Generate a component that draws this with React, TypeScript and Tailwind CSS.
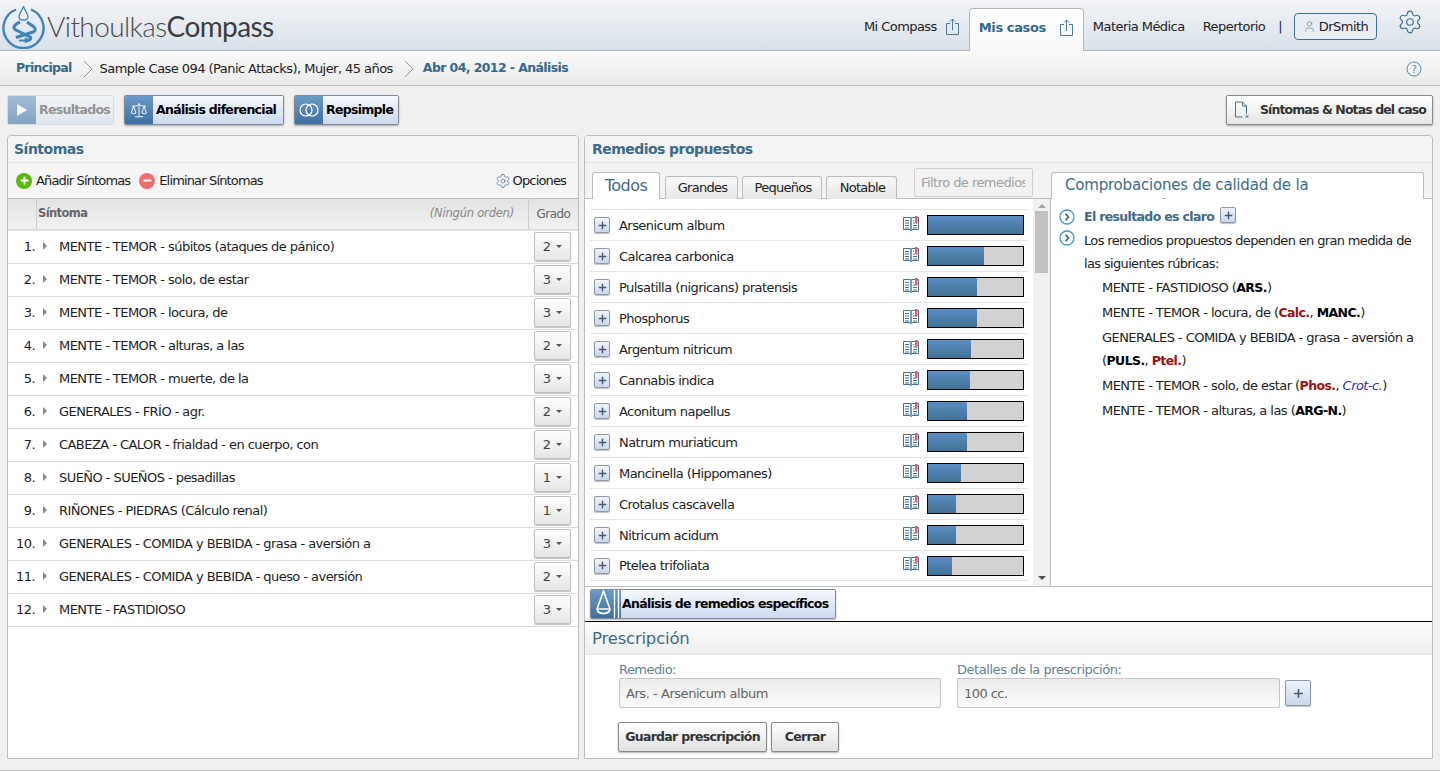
import React from "react";
import { Settings, User, Plus, Minus, Scale } from "lucide-react";

const font = "font-['DejaVu_Sans',sans-serif]";
const bold = "font-bold text-[12.5px] tracking-[-0.7px]";

const Upload = () => (
  <svg width="13" height="17" viewBox="0 0 13 17" fill="none" stroke="#4a7a9c" strokeWidth="1" className="shrink-0">
    <path d="M4 5.500H.5v11h12v-11H9" />
    <path d="M6.500 12V1M4 3.500 6.500 1 9 3.500" />
  </svg>
);

const Book = () => (
  <svg width="16" height="16" viewBox="0 0 16 16" fill="none" className="shrink-0 -mt-[3px]">
    <path d="M.5 1.500h15v12H.5z" stroke="#48708f" fill="#fff" />
    <path d="M8 1v14" stroke="#6d9cbe" strokeWidth="2" />
    <path d="M2 4.500h4M2 7h4M2 9.500h4M2 12h4M10 7h2M10 9.500h4M10 12h4M10 4.500h1" stroke="#48708f" />
    <path d="M12 0h2.500v7L13.200 8 12 7z" fill="#ef5a62" />
  </svg>
);

const Chevron = () => (
  <svg width="16" height="16" viewBox="0 0 16 16" fill="none" className="shrink-0">
    <circle cx="8" cy="8" r="7" stroke="#3f97d6" strokeWidth="1.3" fill="#fff" />
    <path d="m6.500 4.800 3 3.200-3 3.200" stroke="#2f5f86" strokeWidth="1.6" />
  </svg>
);

const PlusBtn = ({ big }: { big?: boolean }) => (
  <span
    className={`flex items-center justify-center shrink-0 rounded-[2px] border border-[#8e99a8] bg-gradient-to-b from-[#f1f4fa] to-[#c9d6ec] shadow-[0_1px_1px_rgba(0,0,0,0.25)] ${
      big ? "w-[26px] h-[26px]" : "w-4 h-4"
    }`}
  >
    <Plus size={big ? 13 : 11} strokeWidth={3} color="#475a70" />
  </span>
);

const Logo = () => (
  <svg width="44" height="46" viewBox="0 0 44 46" fill="none" stroke="#3d85b9" className="shrink-0">
    <path d="M15 6.500A20 20 0 1 0 30 6.500" strokeWidth="2.400" />
    <path d="M22.500 3c-.5 4-4.500 7-4.500 11 0 4 9 4 9 0 0-4-4-7-4.500-11z" strokeWidth="1.300" />
    <path d="M19 19C14 21 11.500 24 14 26.500L29 34c2 1.500 0 3.500-4 3.500" strokeWidth="3" />
    <path d="M26 19l7 5c2 2 1.500 4-1 5L15 34.500" strokeWidth="3" />
    <path d="M18 37.500h7" strokeWidth="2" />
    <path d="m24 34.500 5 3-5 2.500z" fill="#3d85b9" strokeWidth="0.5" />
  </svg>
);

const ActionBtn = ({ icon, label, muted, w }: { icon: React.ReactNode; label: string; muted?: boolean; w: string }) => (
  <button
    className={`flex items-stretch h-[30px] ${w} rounded-[2px] border shadow-[0_1px_2px_rgba(0,0,0,0.3)] overflow-hidden ${
      muted ? "border-[#cfcfcf] opacity-60 shadow-none" : "border-[#7f8b99]"
    }`}
  >
    <span className="w-[28px] shrink-0 flex items-center justify-center bg-gradient-to-b from-[#6b9cc8] to-[#3f6f9f]">{icon}</span>
    <span
      className={`flex-1 flex items-center pl-[3px] pt-[1px] whitespace-nowrap bg-gradient-to-b ${bold} ${
        muted ? "from-[#f4f6fa] to-[#d6e0ee] text-[#555]" : "from-[#f7f9fd] to-[#cbd9f0] text-black"
      }`}
    >
      {label}
    </span>
  </button>
);

const symptoms: [string, number][] = [
  ["MENTE - TEMOR - súbitos (ataques de pánico)", 2],
  ["MENTE - TEMOR - solo, de estar", 3],
  ["MENTE - TEMOR - locura, de", 3],
  ["MENTE - TEMOR - alturas, a las", 2],
  ["MENTE - TEMOR - muerte, de la", 3],
  ["GENERALES - FRÍO - agr.", 2],
  ["CABEZA - CALOR - frialdad - en cuerpo, con", 2],
  ["SUEÑO - SUEÑOS - pesadillas", 1],
  ["RIÑONES - PIEDRAS (Cálculo renal)", 1],
  ["GENERALES - COMIDA y BEBIDA - grasa - aversión a", 3],
  ["GENERALES - COMIDA y BEBIDA - queso - aversión", 2],
  ["MENTE - FASTIDIOSO", 3],
];

const remedies: [string, number][] = [
  ["Arsenicum album", 100],
  ["Calcarea carbonica", 59],
  ["Pulsatilla (nigricans) pratensis", 52],
  ["Phosphorus", 52],
  ["Argentum nitricum", 45],
  ["Cannabis indica", 44],
  ["Aconitum napellus", 41],
  ["Natrum muriaticum", 41],
  ["Mancinella (Hippomanes)", 35],
  ["Crotalus cascavella", 29],
  ["Nitricum acidum", 29],
  ["Ptelea trifoliata", 25],
];

const Tab = ({ label, w }: { label: string; w: string }) => (
  <span className={`h-[23px] ${w} flex items-center justify-center pl-[2px] border border-b-0 border-[#bdbdbd] rounded-t-[3px] bg-gradient-to-b from-[#f8f8f8] to-[#e6e6e6] text-[13px] tracking-[-0.75px] text-[#222]`}>
    {label}
  </span>
);

const Rubric = ({ children }: { children: React.ReactNode }) => (
  <div className="pl-[43px] mb-[2px] leading-[23px] text-[13px] text-[#222] tracking-[-0.55px]">{children}</div>
);

const RB = ({ children, red }: { children: React.ReactNode; red?: boolean }) => (
  <b className={`text-[12.5px] tracking-[-0.6px] ${red ? "text-[#a01010]" : "text-black"}`}>{children}</b>
);

const Arrow = ({ cls }: { cls: string }) => (
  <svg width="10" height="18" viewBox="0 0 10 18" fill="none" stroke="#999" className={cls}>
    <path d="m1 1 8 8-8 8" />
  </svg>
);

export default function App() {
  return (
    <div className={`${font} w-[1440px] h-[771px] overflow-hidden flex flex-col bg-[#f0f0f0] text-[13px] tracking-[-0.55px]`}>
      <header className="h-[51px] shrink-0 flex justify-between border-b border-[#b5b5b5] bg-gradient-to-b from-[#f3f4f6] to-[#d9e1ea]">
        <div className="flex items-center pl-[1px] pt-[1px]">
          <Logo />
          <span className="ml-[2px] text-[28px] tracking-[-0.6px] text-[#4b4b4b] font-['Lato',sans-serif] font-light">
            Vithoulkas<span className="font-normal text-[#3d3d3d]">Compass</span>
          </span>
        </div>
        <nav className="flex items-end text-[#222]">
          <div className="flex items-center gap-[9px] h-[47px] pr-[10px]">
            <span>Mi Compass</span>
            <Upload />
          </div>
          <div className="flex items-center justify-between h-[43px] w-[115px] pl-[9px] pr-[10px] pb-[5px] -mb-px border border-b-0 border-[#b5b5b5] rounded-t-[4px] bg-gradient-to-b from-white to-[#f8f8f8] font-bold tracking-[-0.4px] text-[#356a8c] whitespace-nowrap">
            <span>Mis casos</span>
            <Upload />
          </div>
          <div className="flex items-center h-[47px] pl-[9px]">
            <span>Materia Médica</span>
            <span className="ml-[18px]">Repertorio</span>
            <span className="ml-[13px]">|</span>
            <span className="ml-[12px] w-[83px] h-[27px] flex items-center justify-center gap-[3px] rounded-[4px] border border-[#3f6f94] bg-[#e8edf3]">
              <User size={13} color="#5d8cb0" strokeWidth={1.3} />
              DrSmith
            </span>
          </div>
          <div className="w-[63px] h-full flex justify-center pl-[3px] pt-[9px]">
            <Settings size={26} color="#3f7296" strokeWidth={1.1} />
          </div>
        </nav>
      </header>

      <div className="h-[35px] shrink-0 flex items-center justify-between pl-[16px] pr-[18px] pt-[1px] border-b border-[#bdbdbd] bg-gradient-to-b from-[#fafafa] to-[#eaeaea] text-[#222]">
        <div className="flex items-center">
          <span className={`${bold} text-[#356a8c]`}>Principal</span>
          <Arrow cls="ml-[11px] mr-[7px]" />
          <span>Sample Case 094 (Panic Attacks), Mujer, 45 años</span>
          <Arrow cls="ml-[11px] mr-[9px]" />
          <span className="font-bold text-[12.5px] tracking-[-0.6px] text-[#356a8c]">Abr 04, 2012 - Análisis</span>
        </div>
        <svg width="16" height="16" viewBox="0 0 16 16" fill="none" stroke="#4f86ad">
          <circle cx="8" cy="8" r="7" />
          <text x="8" y="12" textAnchor="middle" fontSize="10" fill="#4f86ad" stroke="none">?</text>
        </svg>
      </div>

      <div className="h-[49px] shrink-0 flex items-center justify-between pl-[7px] pr-[7px] pb-[1px]">
        <div className="flex gap-[10px]">
          <ActionBtn w="w-[107px]" muted label="Resultados" icon={<svg width="12" height="14" viewBox="0 0 12 14"><path d="M1 1l10 6-10 6z" fill="#fff" /></svg>} />
          <ActionBtn w="w-[160px]" label="Análisis diferencial" icon={<Scale size={18} color="#fff" strokeWidth={1.2} />} />
          <ActionBtn
            w="w-[105px]"
            label="Repsimple"
            icon={
              <svg width="20" height="14" viewBox="0 0 20 14" fill="none" stroke="#fff" strokeWidth="1.2">
                <circle cx="7" cy="7" r="6" />
                <circle cx="13" cy="7" r="6" />
              </svg>
            }
          />
        </div>
        <button className="h-[30px] w-[207px] flex items-center gap-[9px] pl-[7px] pt-[1px] rounded-[2px] border border-[#8a8a8a] bg-gradient-to-b from-white to-[#e6e6e6] shadow-[0_1px_2px_rgba(0,0,0,0.3)] text-[#333] whitespace-nowrap font-bold text-[12.5px] tracking-[-0.9px]">
          <svg width="17" height="19" viewBox="0 0 17 19" fill="none" stroke="#4d7390" className="shrink-0">
            <path d="M1.500 1h7l4 4v8M8.500 1v4h4M1.500 1v15h7" />
            <path d="m11.500 14 3 3m0-3-3 3" strokeWidth="1" />
          </svg>
          Síntomas &amp; Notas del caso
        </button>
      </div>

      <main className="h-[624px] shrink-0 flex gap-[5px] pl-[7px] pr-[7px]">
        <section className="w-[572px] shrink-0 flex flex-col border border-[#bdbdbd] rounded-t-[4px] bg-white overflow-hidden">
          <div className="h-[27px] shrink-0 flex items-center pl-[6px] border-b border-[#e2e2e2] bg-[#f4f4f4] text-[14px] font-bold tracking-[-0.5px] text-[#3d6b88]">Síntomas</div>
          <div className="h-[35px] shrink-0 flex items-center justify-between pl-[8px] pr-[12px] bg-[#f5f5f5] text-[#222] tracking-[-0.85px]">
            <div className="flex items-center">
              <span className="w-4 h-4 rounded-full bg-[#5cb80a] flex items-center justify-center"><Plus size={11} strokeWidth={4} color="#fff" /></span>
              <span className="ml-[4px]">Añadir Síntomas</span>
              <span className="ml-[9px] w-4 h-4 rounded-full bg-[#f26d6d] flex items-center justify-center"><Minus size={11} strokeWidth={4} color="#fff" /></span>
              <span className="ml-[4px]">Eliminar Síntomas</span>
            </div>
            <div className="flex items-center gap-[2px]">
              <Settings size={16} color="#4d7390" strokeWidth={1.1} />
              Opciones
            </div>
          </div>
          <div className="h-[33px] shrink-0 flex border-t border-[#bdbdbd] border-b-[2px] border-b-[#e0e0e0] bg-gradient-to-b from-[#e3e3e3] to-[#f1f1f1] text-[12px] text-[#666]">
            <div className="w-[29px] border-r border-[#cfcfcf]" />
            <div className="flex-1 flex items-center justify-between pl-[1px] pr-[14px]">
              <span className="font-bold text-[11.5px] tracking-[-0.6px]">Síntoma</span>
              <span className="italic font-normal text-[11.5px] text-[#888] tracking-[-0.2px]">(Ningún orden)</span>
            </div>
            <div className="w-[50px] border-l border-[#cfcfcf] flex items-center justify-center">Grado</div>
          </div>
          {symptoms.map(([t, g], i) => (
            <div key={i} className="h-[33px] shrink-0 flex items-center border-b border-[#dcdcdc] text-[#1d1d1d]">
              <span className="w-[27px] text-right">{i + 1}.</span>
              <span className="ml-[8px] w-0 h-0 border-y-[4px] border-y-transparent border-l-[4px] border-l-[#888] -mt-[3px]" />
              <span className="ml-[12px] flex-1 whitespace-nowrap">{t}</span>
              <span className="self-start mt-[1px] w-[37px] h-[29px] mr-[7px] flex items-center justify-center gap-[6px] rounded-[2px] border border-[#c0c0c0] bg-gradient-to-b from-white to-[#e5e5e5] shadow-[0_1px_1px_rgba(0,0,0,0.25)] text-[#444]">
                {g}
                <span className="w-0 h-0 border-x-[3px] border-x-transparent border-t-[3px] border-t-[#555]" />
              </span>
            </div>
          ))}
        </section>

        <section className="flex-1 flex flex-col border border-[#bdbdbd] rounded-t-[4px] bg-white overflow-hidden">
          <div className="h-[27px] shrink-0 flex items-center pl-[7px] border-b border-[#e2e2e2] bg-[#f4f4f4] text-[14px] font-bold tracking-[-0.55px] text-[#3d6b88]">Remedios propuestos</div>
          <div className="h-[36px] shrink-0 flex items-end border-b border-[#bdbdbd] bg-[#f3f3f3] pl-[7px] whitespace-nowrap">
            <span className="h-[27px] w-[68px] -mb-px flex items-center justify-center border border-b-0 border-[#bdbdbd] rounded-t-[3px] bg-white text-[16px] text-[#3d6b88]">Todos</span>
            <div className="flex gap-[4px] ml-[5px] -mb-px">
              <Tab label="Grandes" w="w-[73px]" />
              <Tab label="Pequeños" w="w-[80px]" />
              <Tab label="Notable" w="w-[71px]" />
            </div>
            <div className="ml-[17px] mb-[1px] w-[119px] h-[29px] flex items-center pl-[6px] border border-[#d0d0d0] rounded-[2px] bg-[#f2f2f2] text-[#a0a0a0] overflow-hidden">
              <span className="w-[104px] overflow-hidden">Filtro de remedios</span>
            </div>
            <div className="ml-[18px] -mb-px w-[373px] h-[27px] border border-b-0 border-[#bdbdbd] rounded-t-[3px] bg-white px-[13px] pt-[2px] overflow-hidden whitespace-normal text-[15px] leading-[21px] text-[#3d6b88] tracking-[-0.2px]">
              Comprobaciones de calidad de la repertorización
            </div>
          </div>
          <div className="h-[388px] shrink-0 flex border-b border-[#bdbdbd]">
            <div className="w-[437px] shrink-0 ml-[5px] pt-[10px] bg-white">
              {remedies.map(([t, w], i) => (
                <div key={i} className="h-[31px] flex items-center border-t border-[#e3e3e3] last:border-b pl-[4px] text-[#222]">
                  <PlusBtn />
                  <span className="ml-[9px] flex-1 pt-[1px]">{t}</span>
                  <Book />
                  <div className="ml-[8px] mr-[3px] w-[97px] h-[20px] border border-black bg-[#d2d2d2]">
                    <div className="h-full bg-gradient-to-b from-[#5b8ec3] to-[#427294]" style={{ width: `${w}%` }} />
                  </div>
                </div>
              ))}
            </div>
            <div className="w-[17px] shrink-0 ml-[6px] bg-[#f1f1f1] flex flex-col items-center">
              <span className="mt-[5px] w-0 h-0 border-x-[4px] border-x-transparent border-b-[4px] border-b-[#a3a3a3]" />
              <span className="mt-[3px] w-[13px] h-[62px] bg-[#c1c1c1]" />
              <span className="mt-auto mb-[6px] w-0 h-0 border-x-[4px] border-x-transparent border-t-[4px] border-t-[#505050]" />
            </div>
            <div className="flex-1 border-l border-[#bdbdbd] pl-[8px] pt-[8px] text-[#222]">
              <div className="flex items-center h-[20px]">
                <Chevron />
                <span className={`ml-[9px] pt-[1px] text-[#3d6b88] ${bold} tracking-[-0.65px]`}>El resultado es claro</span>
                <span className="ml-[6px] -mt-[4px]"><PlusBtn /></span>
              </div>
              <div className="flex items-start mt-[2px]">
                <span className="mt-[1px]"><Chevron /></span>
                <div className="ml-[9px] w-[335px] leading-[23px] tracking-[-0.65px]">Los remedios propuestos dependen en gran medida de las siguientes rúbricas:</div>
              </div>
              <div className="mt-[1px] w-[366px]">
                <Rubric>MENTE - FASTIDIOSO (<RB>ARS.</RB>)</Rubric>
                <Rubric>MENTE - TEMOR - locura, de (<RB red>Calc.</RB>, <RB>MANC.</RB>)</Rubric>
                <Rubric>GENERALES - COMIDA y BEBIDA - grasa - aversión a (<RB>PULS.</RB>, <RB red>Ptel.</RB>)</Rubric>
                <Rubric>MENTE - TEMOR - solo, de estar (<RB red>Phos.</RB>, <i className="text-[#3030c0]">Crot-c.</i>)</Rubric>
                <Rubric>MENTE - TEMOR - alturas, a las (<RB>ARG-N.</RB>)</Rubric>
              </div>
            </div>
          </div>
          <div className="h-[35px] shrink-0 pl-[5px] pt-[2px] border-b border-black">
            <button className="h-[30px] w-[246px] flex items-stretch rounded-[2px] border border-[#7f8b99] shadow-[0_1px_2px_rgba(0,0,0,0.3)] overflow-hidden text-black">
              <span className="w-[30px] shrink-0 flex items-center justify-center bg-gradient-to-b from-[#6b9cc8] to-[#3f6f9f]">
                <svg width="30" height="28" viewBox="0 0 30 28" fill="none" stroke="#fff" strokeWidth="1.6">
                  <path d="M12.500 1 6 19c1 6 12 6 13 0z" />
                  <path d="M6 19h13" />
                  <path d="M23.500 0v28M27.500 0v28" strokeWidth="1.4" />
                </svg>
              </span>
              <span className={`flex-1 flex items-center pl-[1px] pt-[1px] whitespace-nowrap bg-gradient-to-b from-[#f7f9fd] to-[#cbd9f0] ${bold}`}>Análisis de remedios específicos</span>
            </button>
          </div>
          <div className="h-[33px] shrink-0 flex items-center pl-[7px] pt-[2px] border-b border-[#e2e2e2] bg-gradient-to-b from-[#fdfdfd] to-[#eeeeee] text-[16.5px] text-[#3d6b88] tracking-[-0.2px]">Prescripción</div>
          <div className="flex-1 pl-[34px] pt-[7px]">
            <div className="flex">
              <div className="w-[338px]">
                <div className="text-[#5f7f95] leading-[16px]">Remedio:</div>
                <div className="h-[30px] w-[322px] flex items-center pl-[6px] pt-[1px] border border-[#c5c5c5] rounded-[2px] bg-gradient-to-b from-[#ececec] to-[#fafafa] text-[#666] tracking-[-0.45px]">Ars. - Arsenicum album</div>
              </div>
              <div>
                <div className="text-[#5f7f95] leading-[16px] tracking-[-0.45px]">Detalles de la prescripción:</div>
                <div className="flex items-start">
                  <div className="h-[30px] w-[323px] flex items-center pl-[6px] pt-[1px] border border-[#c5c5c5] rounded-[2px] bg-gradient-to-b from-[#ececec] to-[#fafafa] text-[#666]">100 cc.</div>
                  <span className="ml-[5px] mt-[2px]"><PlusBtn big /></span>
                </div>
              </div>
            </div>
            <div className="flex gap-[4px] mt-[14px] -ml-px">
              <button className={`h-[30px] w-[149px] rounded-[2px] border border-[#8a8a8a] bg-gradient-to-b from-white to-[#e0e0e0] shadow-[0_1px_2px_rgba(0,0,0,0.3)] text-[#333] whitespace-nowrap ${bold}`}>Guardar prescripción</button>
              <button className={`h-[30px] w-[68px] rounded-[2px] border border-[#8a8a8a] bg-gradient-to-b from-white to-[#e0e0e0] shadow-[0_1px_2px_rgba(0,0,0,0.3)] text-[#333] ${bold}`}>Cerrar</button>
            </div>
          </div>
        </section>
      </main>
      <div className="mt-[11px] border-t border-[#c0c0c0]" />
    </div>
  );
}
